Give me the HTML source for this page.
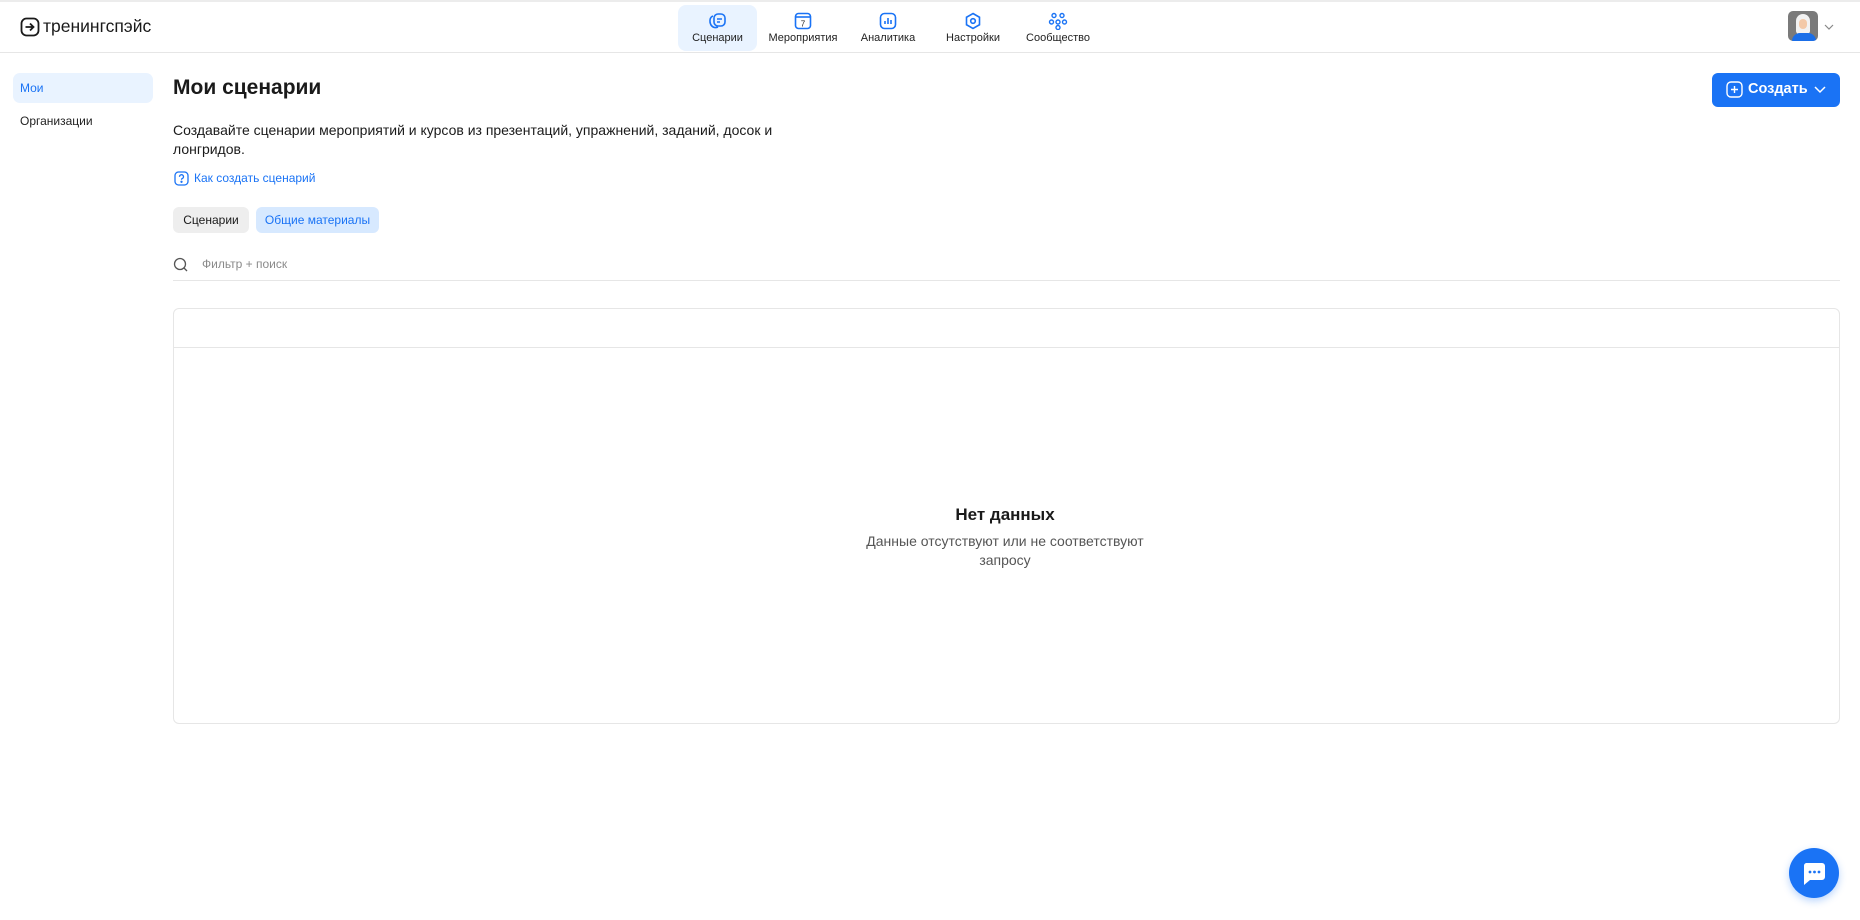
<!DOCTYPE html>
<html><head><meta charset="utf-8">
<style>
*{box-sizing:border-box;margin:0;padding:0}
body{width:1860px;height:920px;overflow:hidden;background:#fff;font-family:"Liberation Sans",sans-serif;color:#1a1a1a;position:relative}
.abs{position:absolute}
.hdr{position:absolute;left:0;top:0;width:1860px;height:53px;border-top:2px solid #ececec;border-bottom:1px solid #e6e6e6}
.nav{position:absolute;top:3px;height:46px;text-align:center;font-size:11px;color:#222}
.nav svg{display:block;margin:7px auto 2px}
.tab-act{background:#e9f3ff;border-radius:8px}
</style></head><body>
<div class="hdr">
  <svg class="abs" style="left:20px;top:15px" width="20" height="20" viewBox="0 0 20 20" fill="none" stroke="#1a1a1a" stroke-width="1.8"><rect x="1.5" y="1.5" width="17" height="17" rx="5"/><path d="M5.5 10h8M10 6.5l3.5 3.5-3.5 3.5"/></svg>
  <div class="abs" style="left:43px;top:14px;font-size:17.5px;color:#1a1a1a">тренингспэйс</div>

  <div class="nav tab-act" style="left:678px;width:79px"><svg width="22" height="18" viewBox="0 0 22 18" fill="none" stroke="#1a73f5" stroke-width="1.6"><path d="M6 4 C3 5 2 9 4 13 C6 16 9 16 11 15"/><rect x="7" y="2" width="11" height="12" rx="4"/><path d="M10 7h5M10 10h3"/></svg>Сценарии</div>
  <div class="nav" style="left:763px;width:80px"><svg width="18" height="18" viewBox="0 0 18 18" fill="none" stroke="#1a73f5" stroke-width="1.6"><rect x="1.5" y="1.5" width="15" height="15" rx="3"/><path d="M1.5 5h15"/><text x="9" y="14.5" font-size="8" text-anchor="middle" fill="#1a1a1a" stroke="none" font-family="Liberation Sans">7</text></svg>Мероприятия</div>
  <div class="nav" style="left:848px;width:80px"><svg width="18" height="18" viewBox="0 0 18 18" fill="none" stroke="#1a73f5" stroke-width="1.6"><rect x="1.5" y="1.5" width="15" height="15" rx="4"/><path d="M6 12V9M9 12V6M12 12V8"/></svg>Аналитика</div>
  <div class="nav" style="left:933px;width:80px"><svg width="18" height="18" viewBox="0 0 18 18" fill="none" stroke="#1a73f5" stroke-width="1.6"><path d="M9 1.5l6.5 3.75v7.5L9 16.5 2.5 12.75v-7.5z"/><circle cx="9" cy="9" r="2.3"/></svg>Настройки</div>
  <div class="nav" style="left:1018px;width:80px"><svg width="20" height="18" viewBox="0 0 20 18" fill="none" stroke="#1a73f5" stroke-width="1.4"><circle cx="6" cy="3.5" r="2"/><circle cx="14" cy="3.5" r="2"/><circle cx="3.5" cy="10" r="2"/><circle cx="10" cy="10" r="2"/><circle cx="16.5" cy="10" r="2"/><circle cx="10" cy="15.5" r="2"/></svg>Сообщество</div>

  <div class="abs" style="left:1788px;top:9px;width:30px;height:30px;border-radius:5px;background:#7a7a7a;overflow:hidden">
    <div class="abs" style="left:8px;top:3px;width:14px;height:20px;border-radius:7px 7px 3px 3px;background:#f2f2f2"></div>
    <div class="abs" style="left:11px;top:8px;width:8px;height:10px;border-radius:4px;background:#f3c9a8"></div>
    <div class="abs" style="left:4px;top:22px;width:24px;height:10px;border-radius:8px 8px 0 0;background:#1a6ee8"></div>
  </div>
  <svg class="abs" style="left:1824px;top:22px" width="10" height="6" viewBox="0 0 10 6" fill="none" stroke="#888" stroke-width="1.2"><path d="M1 1l4 4 4-4"/></svg>
</div>

<div class="abs" style="left:13px;top:73px;width:140px;height:30px;background:#e9f3ff;border-radius:7px"></div>
<div class="abs" style="left:20px;top:81px;font-size:12px;color:#1a73f5">Мои</div>
<div class="abs" style="left:20px;top:114px;font-size:12px;color:#222">Организации</div>

<div class="abs" style="left:173px;top:76px;font-size:21px;font-weight:bold;color:#1a1a1a">Мои сценарии</div>
<div class="abs" style="left:173px;top:121px;font-size:14px;line-height:19px;color:#1a1a1a;width:640px">Создавайте сценарии мероприятий и курсов из презентаций, упражнений, заданий, досок и лонгридов.</div>
<svg class="abs" style="left:174px;top:171px" width="15" height="15" viewBox="0 0 15 15" fill="none" stroke="#1a73f5" stroke-width="1.3"><rect x="1" y="1" width="13" height="13" rx="3.5"/><path d="M5.5 5.8a2 2 0 1 1 2.6 1.8c-.5.2-.6.6-.6 1.1"/><circle cx="7.5" cy="10.8" r=".5" fill="#1a73f5"/></svg>
<div class="abs" style="left:194px;top:171px;font-size:12px;color:#1a73f5">Как создать сценарий</div>

<div class="abs" style="left:173px;top:207px;width:76px;height:26px;background:#eeeeee;border-radius:6px;font-size:12px;line-height:26px;text-align:center;color:#1a1a1a">Сценарии</div>
<div class="abs" style="left:256px;top:207px;width:123px;height:26px;background:#d7e9ff;border-radius:6px;font-size:12px;line-height:26px;text-align:center;color:#1a73f5">Общие материалы</div>

<svg class="abs" style="left:173px;top:257px" width="15" height="15" viewBox="0 0 15 15" fill="none" stroke="#555" stroke-width="1.3"><circle cx="7" cy="7" r="5.5"/><path d="M11 11l3 3"/></svg>
<div class="abs" style="left:202px;top:257px;font-size:12px;color:#8a8a8a">Фильтр + поиск</div>
<div class="abs" style="left:173px;top:280px;width:1667px;height:1px;background:#e6e6e6"></div>

<div class="abs" style="left:173px;top:308px;width:1667px;height:416px;border:1px solid #e6e6e6;border-radius:6px"></div>
<div class="abs" style="left:174px;top:347px;width:1665px;height:1px;background:#e6e6e6"></div>

<div class="abs" style="left:805px;top:505px;width:400px;text-align:center;font-size:17px;font-weight:bold;color:#1a1a1a">Нет данных</div>
<div class="abs" style="left:855px;top:532px;width:300px;text-align:center;font-size:14px;line-height:19px;color:#555">Данные отсутствуют или не соответствуют запросу</div>

<div class="abs" style="left:1712px;top:73px;width:128px;height:34px;background:#1a73f5;border-radius:6px"></div>
<svg class="abs" style="left:1726px;top:81px" width="17" height="17" viewBox="0 0 17 17" fill="none" stroke="#fff" stroke-width="1.4"><rect x="1" y="1" width="15" height="15" rx="4"/><path d="M8.5 5v7M5 8.5h7"/></svg>
<div class="abs" style="left:1748px;top:81px;font-size:14.5px;line-height:17px;font-weight:bold;color:#fff">Создать</div>
<svg class="abs" style="left:1814px;top:86px" width="12" height="8" viewBox="0 0 12 8" fill="none" stroke="#fff" stroke-width="1.5"><path d="M1 1l5 5 5-5"/></svg>

<div class="abs" style="left:1789px;top:848px;width:50px;height:50px;border-radius:50%;background:#1a73f5;box-shadow:0 3px 8px rgba(26,115,245,.3)"></div>
<svg class="abs" style="left:1801px;top:862px" width="26" height="24" viewBox="0 0 26 24"><path d="M5 1h16a3 3 0 0 1 3 3v11a3 3 0 0 1-3 3H9l-6 5V4a3 3 0 0 1 2-3z" fill="#fff"/><circle cx="9" cy="10" r="1.4" fill="#1a73f5"/><circle cx="13.5" cy="10" r="1.4" fill="#1a73f5"/><circle cx="18" cy="10" r="1.4" fill="#1a73f5"/></svg>
</body></html>
